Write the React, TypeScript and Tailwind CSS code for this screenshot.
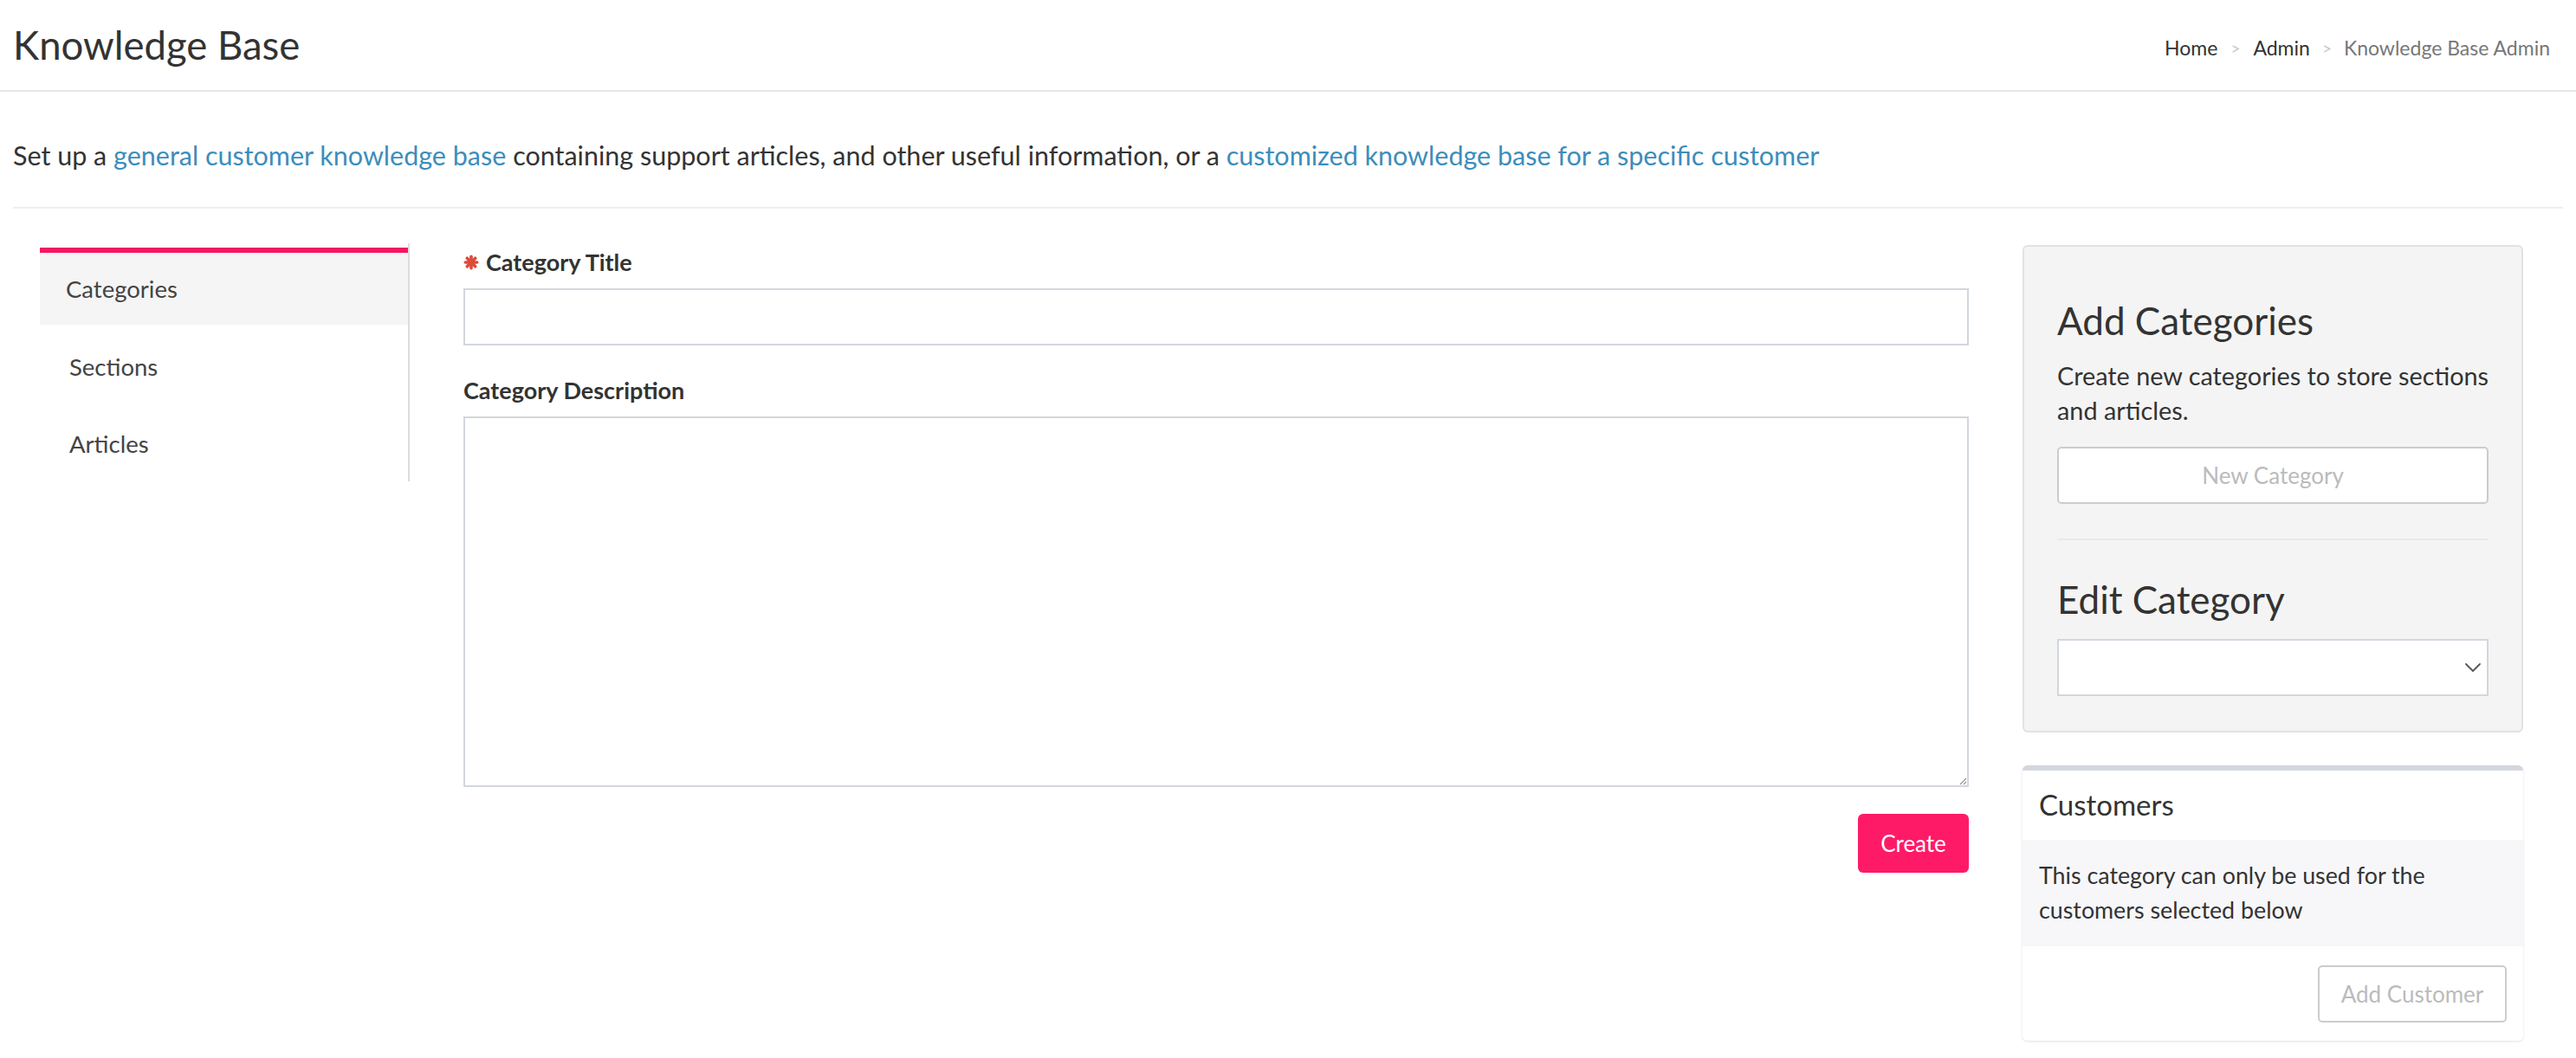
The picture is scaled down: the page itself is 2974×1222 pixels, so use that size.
function Asterisk() {
  return (
    <svg width="18" height="18" viewBox="0 0 16 16" className="shrink-0">
      <g stroke="#dd4b39" strokeWidth="3.2" strokeLinecap="round">
        <line x1="8" y1="2" x2="8" y2="14" />
        <line x1="2" y1="8" x2="14" y2="8" />
        <line x1="3.8" y1="3.8" x2="12.2" y2="12.2" />
        <line x1="12.2" y1="3.8" x2="3.8" y2="12.2" />
      </g>
    </svg>
  );
}

function Chevron() {
  return (
    <svg width="18" height="10" viewBox="0 0 18 10" fill="none">
      <polyline points="1,1 9,9 17,1" stroke="#555" strokeWidth="1.8" strokeLinecap="round" strokeLinejoin="round" />
    </svg>
  );
}

export default function App() {
  return (
    <div className="min-h-[1222px] w-full bg-white font-[Lato,sans-serif] text-[#333]">
      <header className="h-[106px] flex items-center justify-between pl-[15px] pr-[30px] border-b-2 border-[#e6e6e6]">
        <h1 className="text-[45.5px] font-normal leading-none text-[#333]">Knowledge Base</h1>
        <nav className="flex items-center text-[23px] leading-none mt-[6px]">
          <span className="text-[#333]">Home</span>
          <span className="px-[15px] text-[#c8c8c8] text-[19px]">&gt;</span>
          <span className="text-[#333]">Admin</span>
          <span className="px-[14px] text-[#c8c8c8] text-[19px]">&gt;</span>
          <span className="text-[#777]">Knowledge Base Admin</span>
        </nav>
      </header>

      <div className="px-[15px]">
        <p className="pt-[52px] pb-[38px] text-[30.5px] leading-[43px] border-b-2 border-[#eeeeee]">
          Set up a <span className="text-[#3c8dbc]">general customer knowledge base</span> containing support articles, and other useful information, or a{' '}
          <span className="text-[#3c8dbc]">customized knowledge base for a specific customer</span>
        </p>

        <div className="flex items-start pt-[40px]">
          {/* left nav */}
          <div className="ml-[31px] w-[427px] border-r-2 border-[#dddddd] pt-[5px] pb-[3px] text-[27.5px] text-[#444]">
            <div className="h-[89px] border-t-[6px] border-[#f2195f] bg-[#f5f5f5] flex items-center pl-[30px] pt-[1px]">Categories</div>
            <div className="h-[89px] flex items-center pl-[34px] pt-[8px]">Sections</div>
            <div className="h-[89px] flex items-center pl-[34px] pt-[8px]">Articles</div>
          </div>

          {/* form */}
          <div className="ml-[62px] w-[1738px] mt-[4px] flex flex-col">
            <label className="flex items-center gap-[8px] h-[36px] text-[27px] font-bold text-[#333]">
              <Asterisk />
              Category Title
            </label>
            <input className="mt-[12px] h-[66px] w-full border-2 border-[#d2d6de] bg-white outline-none px-[20px] text-[28px]" />
            <label className="mt-[34px] flex items-center h-[36px] text-[27px] font-bold text-[#333]">Category Description</label>
            <textarea className="mt-[12px] h-[428px] w-full border-2 border-[#d2d6de] bg-white outline-none p-[20px] text-[28px]" />
            <button className="mt-[31px] self-end h-[68px] w-[128px] rounded-[6px] bg-[#ff1a68] text-white text-[26px]">Create</button>
          </div>

          {/* right */}
          <div className="ml-[62px] w-[578px] mt-[2px] flex flex-col">
            <div className="border-2 border-[#e2e2e2] bg-[#f4f4f4] rounded-[6px] px-[38px] pt-[60px] pb-[40px]">
              <h2 className="text-[44px] leading-[50px] font-normal text-[#333]">Add Categories</h2>
              <p className="mt-[19px] text-[28.8px] leading-[40px] text-[#333]">
                <span className="block whitespace-nowrap">Create new categories to store sections</span>
                <span className="block">and articles.</span>
              </p>
              <button className="mt-[22px] h-[66px] w-full rounded-[5px] border-2 border-[#cccccc] bg-white text-[26px] text-[#bbbbbb]">New Category</button>
              <div className="mt-[40px] h-[2px] bg-[#e8e8e8]" />
              <h2 className="mt-[43px] text-[44px] leading-[50px] font-normal text-[#333]">Edit Category</h2>
              <div className="mt-[21px] h-[66px] w-full border-2 border-[#d2d6de] bg-white flex items-center justify-end pr-[7px]">
                <Chevron />
              </div>
            </div>

            <div className="mt-[38px] rounded-[6px] border-t-[6px] border-[#d2d6de] bg-white shadow-[0_1px_3px_rgba(0,0,0,0.12)]">
              <div className="h-[80px] flex items-center px-[19px] text-[33px] text-[#333]">Customers</div>
              <div className="bg-[#f7f7f9] px-[19px] pt-[21px] pb-[22px] text-[26.8px] leading-[40px] text-[#333]">
                <span className="block whitespace-nowrap">This category can only be used for the</span>
                <span className="block">customers selected below</span>
              </div>
              <div className="flex justify-end px-[19px] pt-[22px] pb-[21px]">
                <button className="h-[66px] w-[218px] rounded-[5px] border-2 border-[#cccccc] bg-white text-[26px] text-[#bbbbbb]">Add Customer</button>
              </div>
            </div>
          </div>
        </div>
      </div>
    </div>
  );
}
